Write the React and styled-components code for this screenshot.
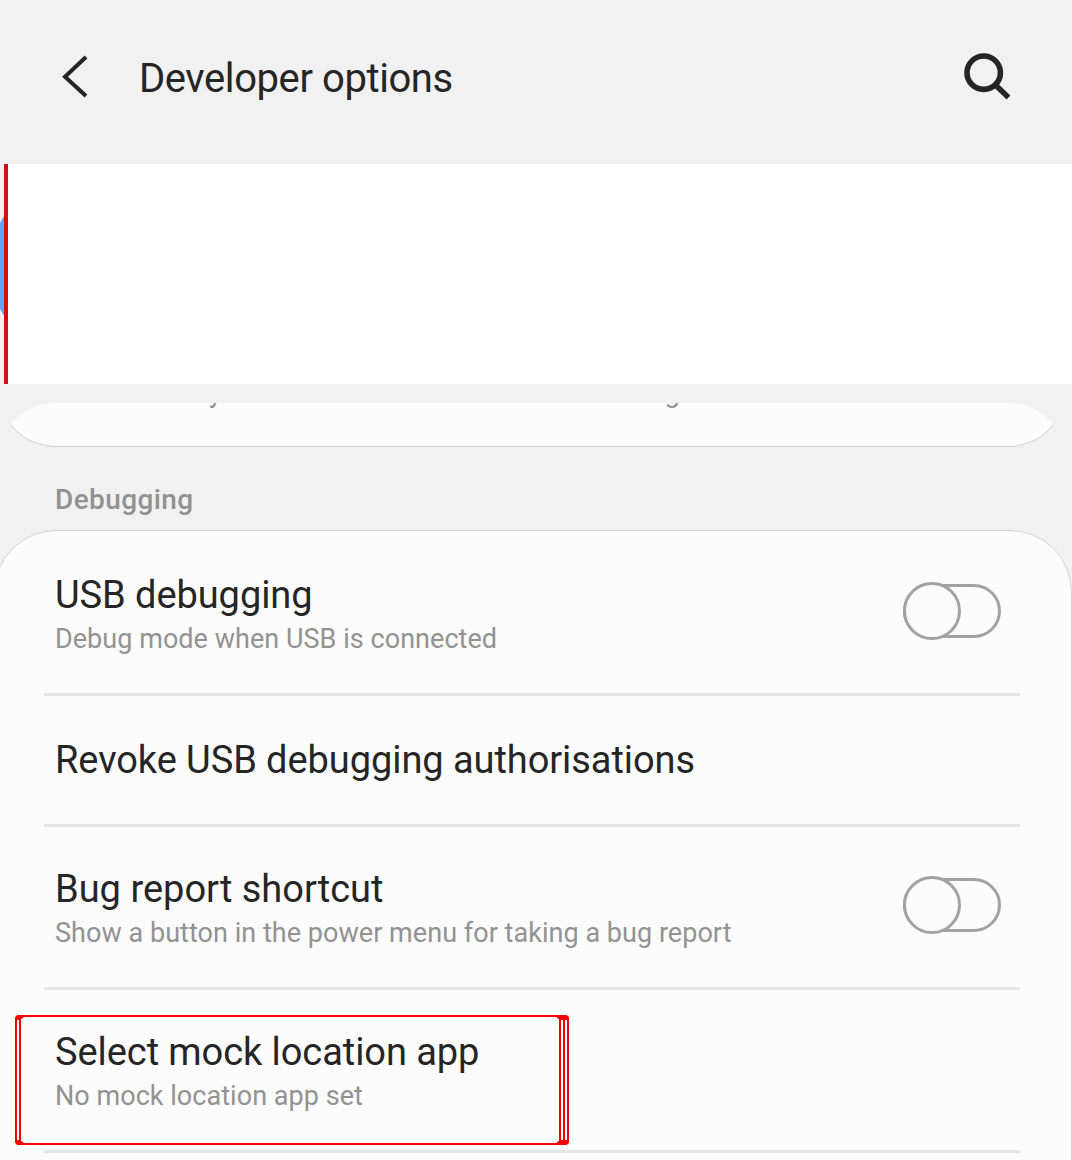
import React from 'react';
import styled, { createGlobalStyle } from 'styled-components';

const GlobalStyle = createGlobalStyle`
  * { box-sizing: border-box; }
  body { margin: 0; background: #f1f1f1; font-family: Roboto, "Liberation Sans", sans-serif; }
`;

const Screen = styled.main`
  display: flex;
  flex-direction: column;
  width: 1072px;
  height: 1160px;
  overflow: hidden;
  background: #f1f1f1;
  color: #252525;
`;

const Header = styled.header`
  display: flex;
  align-items: center;
  flex: 0 0 164px;
  padding: 0 60px 10px 60px;
`;

const Title = styled.h1`
  flex: 1;
  margin: 4px 0 0 47px;
  font-size: 40px;
  line-height: 48px;
  font-weight: 400;
  letter-spacing: -0.42px;
`;

const IconButton = styled.button`
  display: flex;
  padding: 0;
  border: 0;
  background: none;
  color: inherit;
`;

const Banner = styled.section`
  display: flex;
  align-items: center;
  flex: 0 0 220px;
`;

const BannerEdge = styled.div`
  display: flex;
  align-items: center;
  flex: 0 0 4px;
  height: 100%;
  overflow: hidden;
`;

const BlueDisc = styled.div`
  flex: 0 0 180px;
  height: 180px;
  margin: -17px 0 0 -11px;
  border-radius: 50%;
  background: #60a5fa;
`;

const BannerBody = styled.div`
  flex: 1;
  height: 100%;
  border-left: 4px solid #d40f14;
  background: #fff;
`;

const PreviousClip = styled.section`
  flex: 0 0 62px;
  width: 1072px;
  margin: 19px 0 -18px -4px;
  border-radius: 60px 60px 0 0 / 62px 62px 0 0;
  overflow: hidden;
`;

const PreviousCard = styled.div`
  display: flex;
  height: 84px;
  margin-top: -40px;
  padding: 13px 0 0 212px;
  gap: 443px;
  border: 1px solid #d3d3d3;
  border-radius: 0 0 60px 60px / 0 0 62px 62px;
  background: #fcfcfc;
  color: #929292;
  font-size: 27px;
  line-height: 32px;
`;

const SectionTitle = styled.h2`
  flex: none;
  margin: 36px 0 14px 55px;
  font-size: 28px;
  line-height: 33px;
  font-weight: 500;
  letter-spacing: 0.4px;
  color: #929292;
`;

const Card = styled.section`
  flex: 0 0 720px;
  width: 1078px;
  margin-left: -6px;
  padding: 0 51px 0 49px;
  border: 1px solid #d3d3d3;
  border-radius: 62px 62px 0 0;
  background: #fcfcfc;
`;

const Row = styled.div`
  position: relative;
  display: flex;
  align-items: center;
  justify-content: space-between;
  height: ${(p) => p.$height}px;
  padding: 0 19px 0 11px;
  border-bottom: 3px solid #e5e5e5;
`;

const Labels = styled.div`
  padding-top: ${(p) => p.$offset}px;
`;

const RowTitle = styled.div`
  font-size: 38px;
  line-height: 46px;
  letter-spacing: ${(p) => p.$spacing ?? -0.07}px;
`;

const RowText = styled.div`
  margin-top: 4px;
  font-size: 27px;
  line-height: 34px;
  color: #929292;
  letter-spacing: 0.04px;
`;

const Switch = styled.div`
  display: flex;
  align-items: center;
  width: 98px;
  height: 54px;
  margin-bottom: ${(p) => p.$lift}px;
  border: 3px solid #a2a2a2;
  border-radius: 27px;
`;

const Thumb = styled.div`
  flex: none;
  width: 58px;
  height: 58px;
  margin-left: -3px;
  border: 3px solid #a2a2a2;
  border-radius: 50%;
  background: #fcfcfc;
`;

const Outline = styled.div`
  position: absolute;
  top: 25px;
  left: ${(p) => p.$left}px;
  width: ${(p) => p.$width}px;
  height: 130px;
  border: 2px solid #f80000;
  border-radius: 4px;
`;

const leftCap = 'polygon(3px 0, 9px 0, 9px 2px, 5px 5px, 0 5px, 0 3px)';
const rightCap = 'polygon(0 0, 10px 0, 13px 3px, 13px 5px, 4px 5px, 0 2px)';

const CornerCap = styled.div`
  position: absolute;
  top: ${(p) => (p.$bottom ? 150 : 25)}px;
  left: ${(p) => (p.$right ? 512 : -29)}px;
  width: ${(p) => (p.$right ? 13 : 9)}px;
  height: 5px;
  background: #f80000;
  clip-path: ${(p) => (p.$right ? rightCap : leftCap)};
  transform: ${(p) => (p.$bottom ? 'scaleY(-1)' : 'none')};
`;

function Toggle({ lift }) {
  return <Switch role="switch" aria-checked="false" $lift={lift}><Thumb /></Switch>;
}

export default function App() {
  return (
    <Screen>
      <GlobalStyle />
      <Header>
        <IconButton aria-label="Back">
          <svg width="32" height="44" viewBox="0 0 32 44" fill="none" stroke="currentColor" strokeWidth="4">
            <path d="M26 2 L5 21.7 L26 41" />
          </svg>
        </IconButton>
        <Title>Developer options</Title>
        <IconButton aria-label="Search">
          <svg width="50" height="50" viewBox="0 0 50 50" fill="none" stroke="currentColor">
            <circle cx="21.7" cy="20.7" r="16.7" strokeWidth="5.6" />
            <path d="M33.5 33 L46.5 45.5" strokeWidth="5.5" />
          </svg>
        </IconButton>
      </Header>
      <Banner>
        <BannerEdge><BlueDisc /></BannerEdge>
        <BannerBody />
      </Banner>
      <PreviousClip>
        <PreviousCard><span>y</span><span>g</span></PreviousCard>
      </PreviousClip>
      <SectionTitle>Debugging</SectionTitle>
      <Card>
        <Row $height={165}>
          <Labels $offset={4}>
            <RowTitle>USB debugging</RowTitle>
            <RowText>Debug mode when USB is connected</RowText>
          </Labels>
          <Toggle lift={2} />
        </Row>
        <Row $height={131}>
          <RowTitle>Revoke USB debugging authorisations</RowTitle>
        </Row>
        <Row $height={163}>
          <Labels $offset={2}>
            <RowTitle $spacing={0}>Bug report shortcut</RowTitle>
            <RowText>Show a button in the power menu for taking a bug report</RowText>
          </Labels>
          <Toggle lift={4} />
        </Row>
        <Row $height={163}>
          <Outline $left={-29} $width={546} />
          <Outline $left={-25} $width={546} />
          <Outline $left={-25} $width={550} />
          <CornerCap />
          <CornerCap $bottom />
          <CornerCap $right />
          <CornerCap $right $bottom />
          <Labels $offset={2}>
            <RowTitle>Select mock location app</RowTitle>
            <RowText>No mock location app set</RowText>
          </Labels>
        </Row>
      </Card>
    </Screen>
  );
}
